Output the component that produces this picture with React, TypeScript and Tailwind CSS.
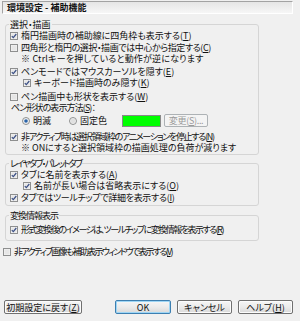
import React from "react";

function CB({ checked }: { checked: boolean }) {
  return (
    <svg width="8" height="8" viewBox="0 0 8 8" className="shrink-0 block">
      <rect x="0.5" y="0.5" width="7" height="7" fill="#f4f4f4" stroke="#8e8f8f" />
      <rect x="1.5" y="1.5" width="5" height="5" fill="#e6e6e6" />
      {checked && (
        <path d="M1.8 4.1 L3.3 5.7 L6.3 2" fill="none" stroke="#3a4f86" strokeWidth="1.2" />
      )}
    </svg>
  );
}

function Radio({ checked }: { checked: boolean }) {
  return (
    <svg width="8" height="8" viewBox="0 0 8 8" className="shrink-0 block">
      <circle cx="4" cy="4" r="3.5" fill="#f2f2f2" stroke="#8e8f8f" />
      {checked ? (
        <circle cx="4" cy="4" r="1.8" fill="#2a63a8" />
      ) : (
        <circle cx="4" cy="4" r="2.4" fill="#e0e0e0" />
      )}
    </svg>
  );
}

function Row({
  checked,
  children,
  className,
  textClass,
}: {
  checked: boolean;
  children: React.ReactNode;
  className?: string;
  textClass?: string;
}) {
  return (
    <div className={"flex items-center h-[11px] shrink-0 " + (className ?? "")}>
      <CB checked={checked} />
      <span className={"ml-[3px] whitespace-nowrap " + (textClass ?? "")}>{children}</span>
    </div>
  );
}

function Btn({
  children,
  className,
  def,
}: {
  children: React.ReactNode;
  className?: string;
  def?: boolean;
}) {
  return (
    <div
      className={
        "h-[14px] flex items-center justify-center rounded-[2px] border bg-gradient-to-b from-[#f6f6f6] via-[#ebebeb] to-[#d9d9d9] whitespace-nowrap " +
        (def
          ? "border-[#3c7fb1] shadow-[inset_0_0_0_1px_#9fd6f5] "
          : "border-[#707070] shadow-[inset_0_0_0_1px_#fcfcfc] ") +
        (className ?? "")
      }
    >
      {children}
    </div>
  );
}

export default function App() {
  return (
    <div className="w-[300px] h-[321px] bg-[#f0f0f0] text-[9px] leading-[11px] text-[#111] [font-family:'Noto_Sans_CJK_JP',sans-serif] [font-feature-settings:'palt'] overflow-hidden">
      {/* header */}
      <div className="ml-[2px] mt-[1px] w-[291px] h-[13px] border-t border-l border-[#a3a3a3] border-b border-r border-b-white border-r-white bg-gradient-to-b from-[#e6e6e6] to-[#f6f6f6] flex items-center pl-[4px] font-bold">
        環境設定 - 補助機能
      </div>

      {/* group 1 */}
      <fieldset className="ml-[5px] mt-[5px] w-[254px] border border-[#d5d5d5] rounded-[3px] pb-[1px]">
        <legend className="ml-[3px] px-[1px] leading-[11px]">選択・描画</legend>
        <div className="flex flex-col pl-[4px]">
          <Row checked>
            楕円描画時の補助線に四角枠も表示する(<u>T</u>)
          </Row>
          <Row checked={false} className="mt-[1px]" textClass="tracking-[-0.4px]">
            四角形と楕円の選択・描画では中心から指定する(<u>C</u>)
          </Row>
          <div className="h-[11px] pl-[11px] whitespace-nowrap tracking-[0.2px]">
            ※ Ctrlキーを押していると動作が逆になります
          </div>
          <Row checked className="mt-[2px]">
            ペンモードではマウスカーソルを隠す(<u>E</u>)
          </Row>
          <Row checked className="ml-[13px]">
            キーボード描画時のみ隠す(<u>K</u>)
          </Row>
          <Row checked={false} className="mt-[3px]">
            ペン描画中も形状を表示する(<u>W</u>)
          </Row>
          <div className="h-[11px] whitespace-nowrap ml-[1px] tracking-[-0.9px]">
            ペン形状の表示方法(<u>S</u>)：
          </div>
          <div className="mt-[1px] h-[13px] flex items-center">
            <div className="ml-[12px] flex items-center">
              <Radio checked />
              <span className="ml-[3px]">明滅</span>
            </div>
            <div className="ml-[18px] flex items-center">
              <Radio checked={false} />
              <span className="ml-[3px]">固定色</span>
            </div>
            <div className="ml-[15px] w-[39px] h-[12px] bg-[#00ff00] border border-[#888]" />
            <div className="ml-[3px] w-[44px] h-[13px] flex items-center justify-center rounded-[2px] border border-[#adb2b5] bg-[#f4f4f4] text-[#9a9a9a] whitespace-nowrap tracking-[-0.3px]">
              変更(<u>S</u>)...
            </div>
          </div>
          <Row checked className="mt-[4px]" textClass="tracking-[-1.3px]">
            非アクティブ時は選択領域枠のアニメーションを停止する(<u>N</u>)
          </Row>
          <div className="h-[11px] pl-[11px] whitespace-nowrap">
            ※ ONにすると選択領域枠の描画処理の負荷が減ります
          </div>
        </div>
      </fieldset>

      {/* group 2 */}
      <fieldset className="ml-[5px] mt-[3px] w-[254px] border border-[#d5d5d5] rounded-[3px] pb-[2px]">
        <legend className="ml-[3px] px-[1px] leading-[11px] tracking-[-1.6px]">レイヤタブ・パレットタブ</legend>
        <div className="flex flex-col pl-[4px]">
          <Row checked>
            タブに名前を表示する(<u>A</u>)
          </Row>
          <Row checked className="ml-[13px]">
            名前が長い場合は省略表示にする(<u>O</u>)
          </Row>
          <Row checked className="mt-[1px]" textClass="tracking-[-0.3px]">
            タブではツールチップで詳細を表示する(<u>I</u>)
          </Row>
        </div>
      </fieldset>

      {/* group 3 */}
      <fieldset className="ml-[5px] mt-[4px] w-[254px] border border-[#d5d5d5] rounded-[3px] pb-[5px]">
        <legend className="ml-[3px] px-[1px] leading-[11px] tracking-[-1px]">変換情報表示</legend>
        <div className="flex flex-col pl-[4px] pt-[3px]">
          <Row checked textClass="tracking-[-1.5px]">
            形式変換後のイメージは、ツールチップに変換情報を表示する(<u>R</u>)
          </Row>
        </div>
      </fieldset>

      <Row checked={false} className="ml-[3px] mt-[5px]" textClass="tracking-[-1.7px]">
        非アクティブ画像も補助表示ウィンドウで表示する(<u>V</u>)
      </Row>

      {/* buttons */}
      <div className="mt-[43px] flex items-center">
        <Btn className="ml-[4px] w-[78px]">
          初期設定に戻す(<u>Z</u>)
        </Btn>
        <Btn def className="ml-[33px] w-[56px]">
          OK
        </Btn>
        <Btn className="ml-[6px] w-[55px]">キャンセル</Btn>
        <Btn className="ml-[6px] w-[55px]">
          ヘルプ(<u>H</u>)
        </Btn>
      </div>
    </div>
  );
}
